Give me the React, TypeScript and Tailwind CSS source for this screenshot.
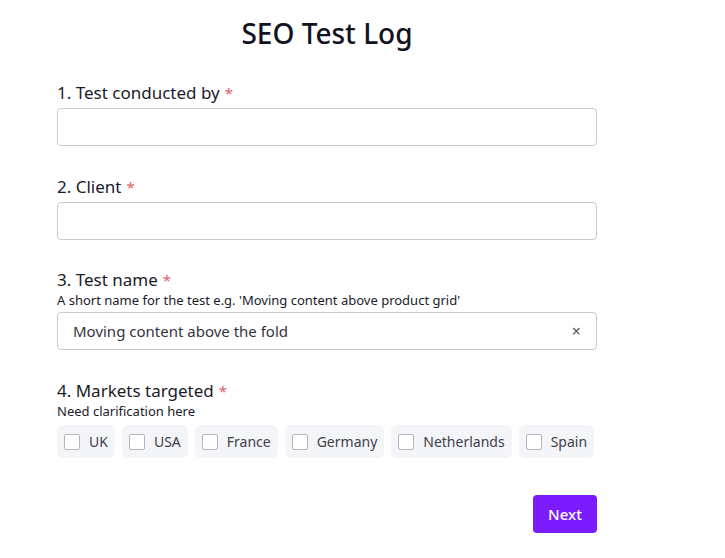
import React from "react";

const Star = () => <span className="text-[#e0606a] ml-[5px] text-[15px]">*</span>;

export default function App() {
  const markets = ["UK", "USA", "France", "Germany", "Netherlands", "Spain"];
  return (
    <div className="w-[725px] h-[558px] bg-white text-[#1b1b2a]" style={{ fontFamily: '"Noto Sans", "Open Sans", sans-serif' }}>
      <div className="ml-[57px] w-[540px] pt-[14px]">
        <h1 className="text-[28px] font-medium text-center leading-[38px] text-[#111322]">SEO Test Log</h1>
        <div className="mt-[29px]">
          <div className="text-[17px] leading-[24px]">1. Test conducted by<Star /></div>
          <div className="mt-[3px] h-[38px] border border-[#c9c9d6] rounded-[4px]" />
        </div>
        <div className="mt-[29px]">
          <div className="text-[17px] leading-[24px]">2. Client<Star /></div>
          <div className="mt-[3px] h-[38px] border border-[#c9c9d6] rounded-[4px]" />
        </div>
        <div className="mt-[28px]">
          <div className="text-[17px] leading-[24px]">3. Test name<Star /></div>
          <div className="text-[13px] leading-[16px]">A short name for the test e.g. 'Moving content above product grid'</div>
          <div className="mt-[4px] h-[38px] border border-[#c9c9d6] rounded-[4px] flex items-center justify-between px-[15px] text-[15px] text-[#333340]">
            <span>Moving content above the fold</span>
            <span className="text-[#555] text-[16px]">×</span>
          </div>
        </div>
        <div className="mt-[29px]">
          <div className="text-[17px] leading-[24px]">4. Markets targeted<Star /></div>
          <div className="text-[13px] leading-[16px]">Need clarification here</div>
          <div className="mt-[6px] flex gap-[7px]">
            {markets.map((m) => (
              <div key={m} className="h-[33px] bg-[#f4f5f9] rounded-[6px] flex items-center gap-[9px] pl-[7px] pr-[7px] text-[14px] text-[#40404c]">
                <span className="w-[16px] h-[16px] bg-white border border-[#b5b5c2] rounded-[2px]" />
                <span>{m}</span>
              </div>
            ))}
          </div>
        </div>
        <div className="mt-[37px] flex justify-end">
          <button className="h-[38px] w-[64px] rounded-[4px] bg-[#7b1cff] text-white text-[15px] font-medium">Next</button>
        </div>
      </div>
    </div>
  );
}
